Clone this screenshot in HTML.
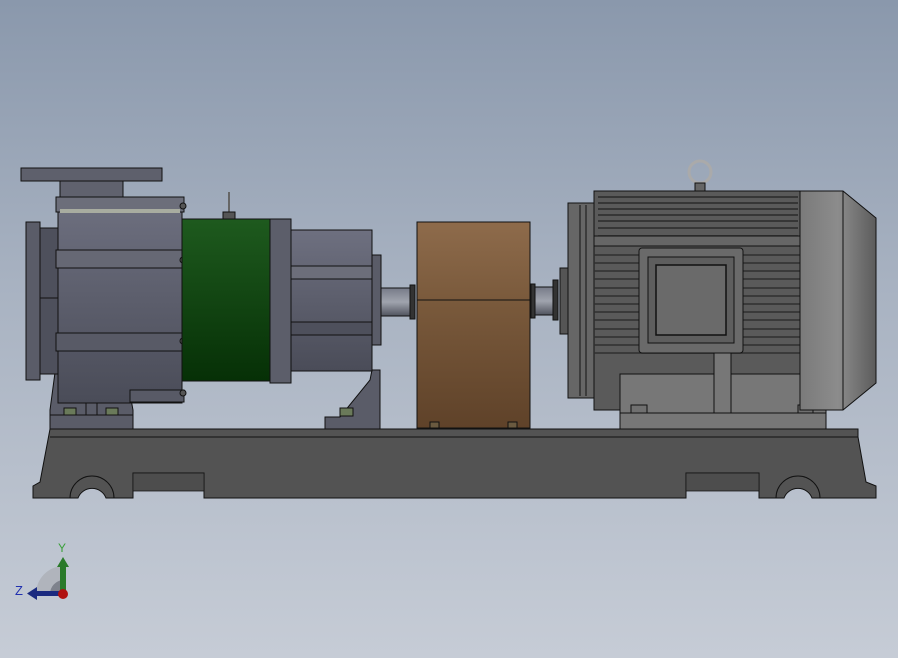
<!DOCTYPE html>
<html><head><style>
html,body{margin:0;padding:0;width:898px;height:658px;overflow:hidden}
body{background:linear-gradient(#8a98ac 0%,#a9b3c2 45%,#c6ccd6 100%)}
svg{position:absolute;left:0;top:0}
</style></head><body>
<svg width="898" height="658" viewBox="0 0 898 658" xmlns="http://www.w3.org/2000/svg" stroke="#111" stroke-width="1">
<defs>
<linearGradient id="grn" x1="0" y1="0" x2="0" y2="1"><stop offset="0" stop-color="#1e5a1e"/><stop offset="1" stop-color="#063006"/></linearGradient>
<linearGradient id="brn" x1="0" y1="0" x2="0" y2="1"><stop offset="0" stop-color="#8e6b4b"/><stop offset="0.38" stop-color="#7a5a3c"/><stop offset="1" stop-color="#5f4229"/></linearGradient>
<linearGradient id="gry" x1="0" y1="0" x2="0" y2="1"><stop offset="0" stop-color="#6e7080"/><stop offset="1" stop-color="#4a4c58"/></linearGradient>
<linearGradient id="fan" x1="0" y1="0" x2="1" y2="0"><stop offset="0" stop-color="#7a7a7a"/><stop offset="0.5" stop-color="#8c8c8c"/><stop offset="1" stop-color="#5c5c5c"/></linearGradient>
<linearGradient id="shaft" x1="0" y1="0" x2="0" y2="1"><stop offset="0" stop-color="#777b88"/><stop offset="0.5" stop-color="#a0a4ae"/><stop offset="1" stop-color="#50535e"/></linearGradient>
</defs>
<!-- base -->
<path d="M50 429 H858 V437 L866 482 L876 486 V498 H812 A15 15 0 0 0 784 498 H759 V473 H686 V498 H204 V473 H133 V498 H106 A15 15 0 0 0 78 498 H33 V486 L40 482 Z" fill="#535353"/>
<line x1="50" y1="437" x2="858" y2="437"/>
<path d="M133 473 H204 V491 H133 Z M686 473 H759 V491 H686Z" fill="#4d4d4d" stroke-width="0.7"/>
<path d="M70 498 A22 22 0 0 1 114 498 M776 498 A22 22 0 0 1 820 498" fill="none"/>
<!-- pump foot -->
<path d="M58 350 H122 L133 410 V429 H50 V410 Z" fill="#5a5c68"/>
<line x1="86" y1="350" x2="86" y2="415"/><line x1="97" y1="350" x2="97" y2="415"/>
<line x1="50" y1="415" x2="133" y2="415"/>
<rect x="64" y="408" width="12" height="7" fill="#6a7a5a"/><rect x="106" y="408" width="12" height="7" fill="#6a7a5a"/>
<!-- bracket foot -->
<path d="M372 370 H380 V429 H325 V417 H340 L370 380 Z" fill="#5a5c68"/>
<rect x="340" y="408" width="13" height="8" fill="#6a7a5a"/>
<!-- pump top flange -->
<rect x="21" y="168" width="141" height="13" fill="#5e606c"/>
<rect x="60" y="181" width="63" height="18" fill="#60626e"/>
<!-- left end flange -->
<rect x="26" y="222" width="14" height="158" fill="#5a5c68"/>
<rect x="40" y="228" width="18" height="146" fill="#4e505c"/>
<line x1="40" y1="298" x2="58" y2="298"/>
<!-- casing -->
<rect x="58" y="197" width="124" height="206" fill="url(#gry)"/>
<rect x="56" y="197" width="128" height="15" fill="#6c6e7a"/>
<rect x="60" y="209" width="120" height="4" fill="#a8aca0" stroke="none"/>
<rect x="56" y="250" width="128" height="18" fill="#666874"/>
<rect x="56" y="333" width="128" height="18" fill="#585a66"/>
<rect x="130" y="390" width="54" height="12" fill="#585a66"/>
<circle cx="183" cy="206" r="3" fill="#555"/><circle cx="183" cy="260" r="3" fill="#555"/><circle cx="183" cy="341" r="3" fill="#555"/><circle cx="183" cy="393" r="3" fill="#555"/>
<!-- green -->
<rect x="182" y="219" width="88" height="162" fill="url(#grn)"/>
<line x1="229" y1="192" x2="229" y2="212" stroke="#666" stroke-width="2"/>
<rect x="223" y="212" width="12" height="7" fill="#555"/>
<rect x="270" y="219" width="21" height="164" fill="#5c5e6a"/>
<!-- bearing housing -->
<rect x="291" y="230" width="81" height="141" fill="url(#gry)"/>
<rect x="291" y="266" width="81" height="13" fill="#6c6e7a"/>
<rect x="291" y="322" width="81" height="13" fill="#4e505c"/>
<rect x="372" y="255" width="9" height="90" fill="#5a5c68"/>
<rect x="381" y="288" width="32" height="28" fill="url(#shaft)"/>
<rect x="410" y="285" width="5" height="34" fill="#333"/>
<!-- coupling guard -->
<rect x="417" y="222" width="113" height="206" fill="url(#brn)"/>
<line x1="417" y1="300" x2="530" y2="300"/>
<rect x="430" y="422" width="9" height="6" fill="#6a5a40"/><rect x="508" y="422" width="9" height="6" fill="#6a5a40"/>
<!-- motor shaft -->
<rect x="530" y="287" width="26" height="28" fill="url(#shaft)"/>
<rect x="531" y="284" width="4" height="34" fill="#333"/>
<rect x="553" y="280" width="5" height="40" fill="#333"/>
<rect x="560" y="268" width="9" height="66" fill="#555"/>
<!-- motor flange -->
<rect x="568" y="203" width="27" height="195" fill="#666" />
<line x1="580" y1="205" x2="580" y2="396"/><line x1="586" y1="205" x2="586" y2="396"/>
<!-- motor body -->
<rect x="594" y="191" width="206" height="219" fill="#5a5a5a"/>
<g stroke="#2a2a2a" stroke-width="1.5">
<line x1="598" y1="197" x2="798" y2="197"/><line x1="598" y1="203" x2="798" y2="203"/><line x1="598" y1="209" x2="798" y2="209"/><line x1="598" y1="215" x2="798" y2="215"/><line x1="598" y1="221" x2="798" y2="221"/><line x1="598" y1="228" x2="798" y2="228"/><line x1="598" y1="236" x2="798" y2="236"/>
</g>
<rect x="594" y="236" width="206" height="10" fill="#666"/>
<g stroke="#303030" stroke-width="1.5">
<line x1="594" y1="255" x2="800" y2="255"/><line x1="594" y1="263" x2="800" y2="263"/><line x1="594" y1="271" x2="800" y2="271"/><line x1="594" y1="279" x2="800" y2="279"/><line x1="594" y1="288" x2="800" y2="288"/><line x1="594" y1="296" x2="800" y2="296"/><line x1="594" y1="304" x2="800" y2="304"/><line x1="594" y1="312" x2="800" y2="312"/><line x1="594" y1="320" x2="800" y2="320"/><line x1="594" y1="329" x2="800" y2="329"/><line x1="594" y1="337" x2="800" y2="337"/><line x1="594" y1="345" x2="800" y2="345"/><line x1="594" y1="353" x2="800" y2="353"/>
</g>
<rect x="639" y="248" width="104" height="105" rx="3" fill="#6a6a6a"/>
<rect x="648" y="257" width="86" height="86" fill="#5e5e5e"/>
<rect x="656" y="265" width="70" height="70" fill="#6a6a6a" stroke-width="1.5"/>
<!-- motor foot -->
<rect x="620" y="374" width="206" height="55" fill="#777"/>
<line x1="620" y1="413" x2="826" y2="413"/>
<rect x="714" y="353" width="17" height="60" fill="#777"/>
<rect x="631" y="405" width="16" height="8" fill="#707070"/><rect x="798" y="405" width="15" height="8" fill="#707070"/>
<!-- fan cover -->
<path d="M800 191 H843 L876 218 V383 L843 410 H800 Z" fill="url(#fan)"/>
<line x1="843" y1="191" x2="843" y2="410"/>
<!-- eyebolt -->
<circle cx="700" cy="172" r="11" fill="none" stroke="#aaa" stroke-width="3"/>
<rect x="695" y="183" width="10" height="8" fill="#666"/>
<!-- triad -->
<g stroke="none">
<path d="M36 594 A28 28 0 0 1 63 566 V594Z" fill="#b0b4bc"/>
<path d="M50 594 A14 14 0 0 1 63 580 V594Z" fill="#7e828c"/>
<rect x="60" y="566" width="6" height="28" fill="#2a7a2a"/>
<path d="M57 567 L63 557 L69 567Z" fill="#2a7a2a"/>
<rect x="36" y="591" width="27" height="5" fill="#1a2a80"/>
<path d="M37 587 L27 593.5 L37 600Z" fill="#1a2a80"/>
<circle cx="63" cy="594" r="5" fill="#b01010"/>
<text x="58" y="552" font-family="Liberation Sans, sans-serif" font-size="12" fill="#3aa03a">Y</text>
<text x="15" y="595" font-family="Liberation Sans, sans-serif" font-size="13" fill="#2030b0">Z</text>
</g>
</svg>
</body></html>
